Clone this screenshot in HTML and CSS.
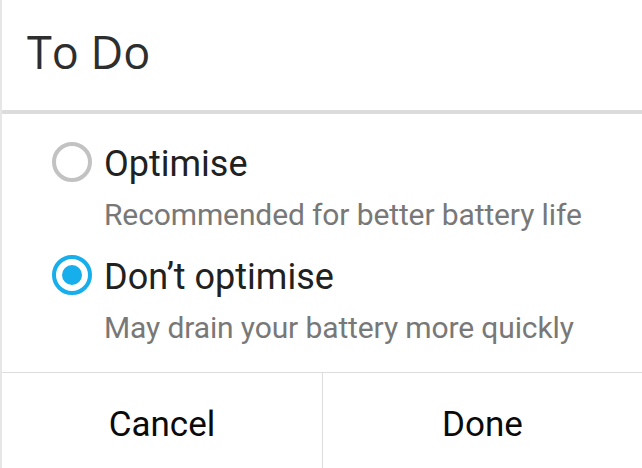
FILE: index.html
```html
<!DOCTYPE html>
<html lang="en">
<head>
<meta charset="utf-8">
<title>To Do</title>
<link rel="stylesheet" href="styles.css">
</head>
<body>
<div class="dialog">
  <header class="head">
    <h1 class="title">To Do</h1>
  </header>
  <div class="options">
    <div class="opt">
      <span class="radio"></span>
      <div class="txt">
        <div class="label">Optimise</div>
        <div class="sub">Recommended for better battery life</div>
      </div>
    </div>
    <div class="opt">
      <span class="radio checked"></span>
      <div class="txt">
        <div class="label">Don’t optimise</div>
        <div class="sub">May drain your battery more quickly</div>
      </div>
    </div>
  </div>
  <div class="actions">
    <button class="btn">Cancel</button>
    <button class="btn">Done</button>
  </div>
</div>
</body>
</html>
```

FILE: styles.css
```css
html, body {
  margin: 0;
  padding: 0;
  background: #ffffff;
}

.dialog {
  width: 642px;
  height: 468px;
  box-sizing: border-box;
  border-left: 2px solid #e6e6e6;
  display: flex;
  flex-direction: column;
  font-family: Roboto, "Liberation Sans", sans-serif;
}

.head {
  height: 110px;
  border-bottom: 4px solid #dcdcdc;
}

.title {
  margin: 0;
  padding-left: 25px;
  font-family: "Open Sans", "Noto Sans", sans-serif;
  font-weight: 400;
  font-size: 45px;
  line-height: 104px;
  color: #2e2e2e;
}

.options {
  display: flex;
  flex-direction: column;
  gap: 24px;
  padding: 30px 0 26px 50px;
}

.opt {
  display: flex;
  align-items: flex-start;
  gap: 12px;
}

.radio {
  width: 40px;
  height: 40px;
  box-sizing: border-box;
  border: 4px solid #c2c2c2;
  border-radius: 50%;
  margin-top: -2px;
  flex: none;
  display: flex;
  align-items: center;
  justify-content: center;
}

.radio.checked {
  border-color: #16aeeb;
}

.radio.checked::after {
  content: "";
  width: 20px;
  height: 20px;
  border-radius: 50%;
  background: #16aeeb;
}

.label {
  font-size: 36px;
  line-height: 40px;
  color: #212121;
}

.sub {
  margin-top: 13px;
  font-size: 30px;
  line-height: 36px;
  letter-spacing: -0.12px;
  color: #787878;
}

.actions {
  flex: 1;
  display: grid;
  grid-template-columns: 1fr 1fr;
  border-top: 1px solid #dddddd;
}

.btn {
  border: 0;
  background: transparent;
  margin: 0;
  padding: 9px 0 0;
  font-family: Roboto, "Liberation Sans", sans-serif;
  font-size: 35px;
  line-height: 86px;
  color: #0a0a0a;
  text-align: center;
}

.btn + .btn {
  border-left: 1px solid #dddddd;
}
```
